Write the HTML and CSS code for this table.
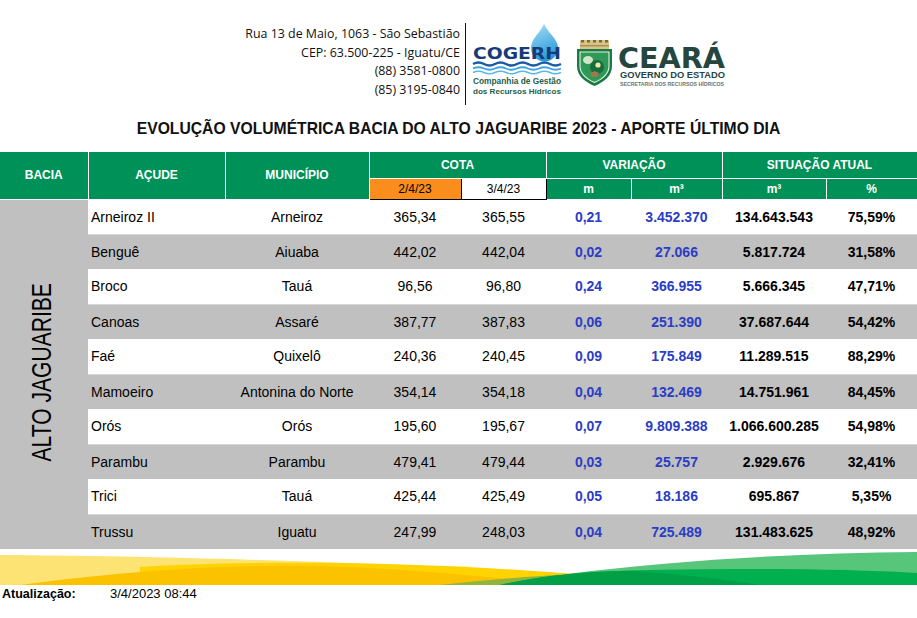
FILE: index.html
```html
<!DOCTYPE html>
<html lang="pt-BR">
<head>
<meta charset="utf-8">
<title>Evolução Volumétrica - Alto Jaguaribe</title>
<link rel="stylesheet" href="styles.css">
</head>
<body>
<header class="top">
  <div class="addr">
    <div>Rua 13 de Maio, 1063 - São Sebastião</div>
    <div>CEP: 63.500-225 - Iguatu/CE</div>
    <div>(88) 3581-0800</div>
    <div>(85) 3195-0840</div>
  </div>
  <div class="divider"></div>
  <svg class="cogerh" width="94" height="78" viewBox="0 0 94 78" xmlns="http://www.w3.org/2000/svg">
    <defs>
      <linearGradient id="drop" x1="0" y1="0" x2="0.3" y2="1">
        <stop offset="0" stop-color="#a9def7"/>
        <stop offset="1" stop-color="#2a9bd8"/>
      </linearGradient>
    </defs>
    <path d="M72 1 C68 10 59 16 59 25 A13.5 13.5 0 0 0 86 25 C86 16 76 10 72 1 Z" fill="url(#drop)"/>
    <text x="1" y="36" font-family="DejaVu Sans, sans-serif" font-weight="bold" font-size="15" fill="#173b78" textLength="88" lengthAdjust="spacingAndGlyphs">COGERH</text>
    <path d="M1 41 q5.5 -3 11 0 t11 0 t11 0 t11 0 t11 0 t11 0 t11 0 t11 0" fill="none" stroke="#1c5aa8" stroke-width="2.4"/>
    <path d="M1 45.5 q5.5 -2.5 11 0 t11 0 t11 0 t11 0 t11 0 t11 0 t11 0 t11 0" fill="none" stroke="#3aa6df" stroke-width="1.8"/>
    <path d="M1 49.5 q5.5 -2.5 11 0 t11 0 t11 0 t11 0 t11 0 t11 0 t11 0 t11 0" fill="none" stroke="#5bb7e6" stroke-width="1.5"/>
    <text x="1" y="61" font-family="Liberation Sans, Arial, sans-serif" font-weight="bold" font-size="8.3" fill="#22604c" textLength="88" lengthAdjust="spacingAndGlyphs">Companhia de Gestão</text>
    <text x="1" y="71" font-family="Liberation Sans, Arial, sans-serif" font-weight="bold" font-size="8.1" fill="#22604c" textLength="88" lengthAdjust="spacingAndGlyphs">dos Recursos Hídricos</text>
  </svg>
  <svg class="ceara" width="156" height="56" viewBox="0 0 156 56" xmlns="http://www.w3.org/2000/svg">
    <rect x="6" y="4" width="29" height="10" rx="1" fill="#d9c488"/>
    <path d="M7 4h3v2.5h-3zM13 4h3v2.5h-3zM19 4h3v2.5h-3zM25 4h3v2.5h-3zM31 4h3v2.5h-3z" fill="#7d6a36"/>
    <rect x="6" y="9" width="29" height="1.4" fill="#a88f52"/>
    <path d="M3 13 H38 V30 C38 40 30 46 20.5 50 C11 46 3 40 3 30 Z" fill="#1a7a45"/>
    <path d="M6 16 H35 V30 C35 38 28.5 43 20.5 46.5 C12.5 43 6 38 6 30 Z" fill="#2f9a57" stroke="#e3f0df" stroke-width="1.1"/>
    <ellipse cx="14" cy="24" rx="5" ry="4" fill="#cfe5c6"/>
    <circle cx="23" cy="31" r="7" fill="#176d3c"/>
    <circle cx="24" cy="29" r="2.6" fill="#efe6b0"/>
    <path d="M16 38 q4 -5 9 -1 l-2 4 h-5 z" fill="#9c7a4c"/>
    <text x="44" y="32" font-family="DejaVu Sans, sans-serif" font-weight="bold" font-size="28.5" fill="#24463f" textLength="107" lengthAdjust="spacingAndGlyphs">CEARÁ</text>
    <text x="46" y="42" font-family="Liberation Sans, Arial, sans-serif" font-weight="bold" font-size="9" fill="#24463f" textLength="105" lengthAdjust="spacingAndGlyphs">GOVERNO DO ESTADO</text>
    <text x="46" y="49.5" font-family="Liberation Sans, Arial, sans-serif" font-weight="bold" font-size="4.8" fill="#6a7470" textLength="104" lengthAdjust="spacingAndGlyphs">SECRETARIA DOS RECURSOS HÍDRICOS</text>
  </svg>
</header>

<h1 class="title">EVOLUÇÃO VOLUMÉTRICA BACIA DO ALTO JAGUARIBE 2023 - APORTE ÚLTIMO DIA</h1>

<table class="grid">
  <colgroup>
    <col class="c-bacia"><col class="c-acude"><col class="c-mun"><col class="c-d1"><col class="c-d2"><col class="c-m"><col class="c-m3"><col class="c-sa"><col class="c-pct">
  </colgroup>
  <thead>
    <tr class="hr1">
      <th rowspan="2">BACIA</th>
      <th rowspan="2">AÇUDE</th>
      <th rowspan="2">MUNICÍPIO</th>
      <th colspan="2">COTA</th>
      <th colspan="2">VARIAÇÃO</th>
      <th colspan="2">SITUAÇÃO ATUAL</th>
    </tr>
    <tr class="hr2">
      <th class="d1">2/4/23</th>
      <th class="d2">3/4/23</th>
      <th>m</th>
      <th>m³</th>
      <th>m³</th>
      <th>%</th>
    </tr>
  </thead>
  <tbody>
    <tr class="w">
      <td rowspan="10" class="bacia"><span>ALTO JAGUARIBE</span></td>
      <td class="name">Arneiroz II</td><td>Arneiroz</td><td>365,34</td><td>365,55</td><td class="b">0,21</td><td class="b">3.452.370</td><td class="s">134.643.543</td><td class="s">75,59%</td>
    </tr>
    <tr class="g">
      <td class="name">Benguê</td><td>Aiuaba</td><td>442,02</td><td>442,04</td><td class="b">0,02</td><td class="b">27.066</td><td class="s">5.817.724</td><td class="s">31,58%</td>
    </tr>
    <tr class="w">
      <td class="name">Broco</td><td>Tauá</td><td>96,56</td><td>96,80</td><td class="b">0,24</td><td class="b">366.955</td><td class="s">5.666.345</td><td class="s">47,71%</td>
    </tr>
    <tr class="g">
      <td class="name">Canoas</td><td>Assaré</td><td>387,77</td><td>387,83</td><td class="b">0,06</td><td class="b">251.390</td><td class="s">37.687.644</td><td class="s">54,42%</td>
    </tr>
    <tr class="w">
      <td class="name">Faé</td><td>Quixelô</td><td>240,36</td><td>240,45</td><td class="b">0,09</td><td class="b">175.849</td><td class="s">11.289.515</td><td class="s">88,29%</td>
    </tr>
    <tr class="g">
      <td class="name">Mamoeiro</td><td>Antonina do Norte</td><td>354,14</td><td>354,18</td><td class="b">0,04</td><td class="b">132.469</td><td class="s">14.751.961</td><td class="s">84,45%</td>
    </tr>
    <tr class="w">
      <td class="name">Orós</td><td>Orós</td><td>195,60</td><td>195,67</td><td class="b">0,07</td><td class="b">9.809.388</td><td class="s">1.066.600.285</td><td class="s">54,98%</td>
    </tr>
    <tr class="g">
      <td class="name">Parambu</td><td>Parambu</td><td>479,41</td><td>479,44</td><td class="b">0,03</td><td class="b">25.757</td><td class="s">2.929.676</td><td class="s">32,41%</td>
    </tr>
    <tr class="w">
      <td class="name">Trici</td><td>Tauá</td><td>425,44</td><td>425,49</td><td class="b">0,05</td><td class="b">18.186</td><td class="s">695.867</td><td class="s">5,35%</td>
    </tr>
    <tr class="g">
      <td class="name">Trussu</td><td>Iguatu</td><td>247,99</td><td>248,03</td><td class="b">0,04</td><td class="b">725.489</td><td class="s">131.483.625</td><td class="s">48,92%</td>
    </tr>
  </tbody>
</table>

<svg class="wave" width="917" height="36" viewBox="0 0 917 36" preserveAspectRatio="none" xmlns="http://www.w3.org/2000/svg">
  <path d="M0 6 C150 7 350 12 575 25 L575 36 L0 36 Z" fill="#fde274"/>
  <path d="M140 18 C230 12 400 11 575 25 L575 36 L140 36 Z" fill="#ffd301"/>
  <path d="M20 36 C110 24 220 15 320 17 C420 20 510 30 565 36 Z" fill="#fbc200"/>
  <path d="M440 36 C490 31 530 27 575 25 L575 36 Z" fill="#8fb53a"/>
  <path d="M567 25 C680 11 800 4 917 3 L917 36 L567 36 Z" fill="#57c67b"/>
  <path d="M500 36 C540 27 585 22 650 21 C760 19 850 20 917 24 L917 36 Z" fill="#00b04f"/>
  <path d="M500 36 C540 27 585 22 630 22 C680 25 730 31 760 36 Z" fill="#019f46"/>
</svg>

<footer class="foot">
  <span class="lbl">Atualização:</span>
  <span class="dt">3/4/2023 08:44</span>
</footer>
</body>
</html>
```

FILE: styles.css
```css
* { box-sizing: border-box; }

html, body {
  margin: 0;
  padding: 0;
  background: #ffffff;
}

body {
  width: 917px;
  font-family: "Liberation Sans", Arial, sans-serif;
  color: #000;
}

.top {
  display: flex;
  align-items: flex-start;
  height: 117px;
  padding-top: 22px;
}

.addr {
  width: 460px;
  padding-top: 3px;
  text-align: right;
  font-family: "Open Sans", "Liberation Sans", sans-serif;
  font-size: 12.4px;
  line-height: 18.7px;
  color: #111;
}

.divider {
  width: 1px;
  height: 82px;
  margin-left: 5px;
  margin-top: 1px;
  background: #111;
}

.cogerh {
  display: block;
  margin-left: 6px;
  margin-top: 1px;
}

.ceara {
  display: block;
  margin-left: 8px;
  margin-top: 14px;
}

.title {
  margin: 0;
  height: 24px;
  line-height: 24px;
  text-align: center;
  font-size: 15.7px;
  font-weight: bold;
  color: #111;
}

.grid {
  margin-top: 11px;
  width: 917px;
  border-collapse: collapse;
  table-layout: fixed;
}

.c-bacia { width: 88px; }
.c-acude { width: 137px; }
.c-mun { width: 144px; }
.c-d1 { width: 92px; }
.c-d2 { width: 85px; }
.c-m { width: 85px; }
.c-m3 { width: 91px; }
.c-sa { width: 104px; }
.c-pct { width: 91px; }

.grid th {
  background: #009158;
  color: #fff;
  font-size: 12px;
  font-weight: bold;
  border: 1px solid #fff;
  padding: 0;
  text-align: center;
}

.grid thead tr:first-child th { border-top: 0; }
.grid th:first-child { border-left: 0; }

.hr1 th { height: 26px; }
.hr2 th { height: 21px; }

.grid th.d1 {
  background: #fb8d1d;
  color: #000;
  font-weight: normal;
  border: 1px solid #000;
}

.grid th.d2 {
  background: #fff;
  color: #000;
  font-weight: normal;
  border: 1px solid #000;
}

.grid td {
  height: 35px;
  padding: 0;
  font-size: 14px;
  text-align: center;
  white-space: nowrap;
}

.grid tr.w td { background: #ffffff; border-bottom: 1px solid #d6d6d6; }
.grid tr.g td { background: #c0c0c0; }

.grid td.name {
  text-align: left;
  padding-left: 3px;
}

.grid td.b {
  color: #2a3dc4;
  font-weight: bold;
}

.grid td.s { font-weight: bold; }

.grid tr td.bacia {
  background: #c0c0c0;
  border-bottom: 0;
  vertical-align: middle;
  text-align: center;
}

.bacia span {
  display: inline-block;
  margin-right: 3px;
  writing-mode: vertical-rl;
  transform: rotate(180deg) scaleY(0.78);
  font-size: 27px;
  font-weight: normal;
  line-height: 1;
}

.wave {
  display: block;
}

.foot {
  display: flex;
  height: 20px;
  line-height: 18px;
}

.lbl {
  width: 110px;
  padding-left: 2px;
  font-size: 12.5px;
  font-weight: bold;
}

.dt {
  font-size: 13px;
}
```
